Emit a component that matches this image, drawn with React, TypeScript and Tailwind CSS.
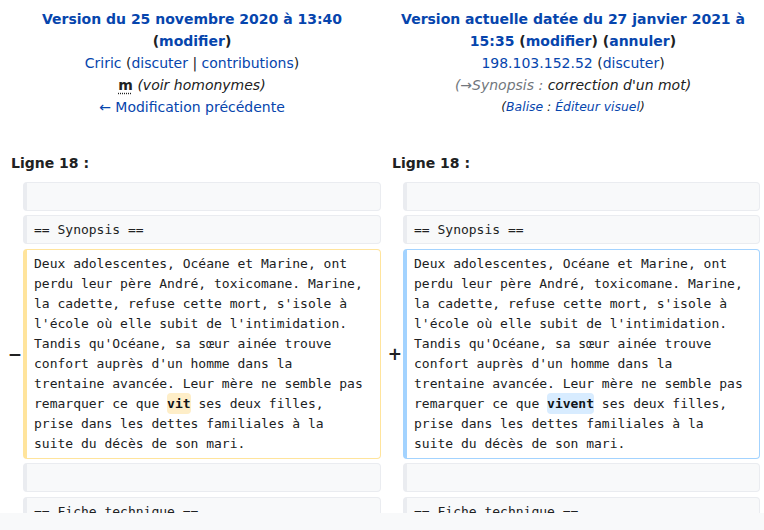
import React from "react";

const link = "text-[#0645ad]";

const leftLines: React.ReactNode[] = [
  "Deux adolescentes, Océane et Marine, ont",
  "perdu leur père André, toxicomane. Marine,",
  "la cadette, refuse cette mort, s'isole à",
  "l'école où elle subit de l'intimidation.",
  "Tandis qu'Océane, sa sœur ainée trouve",
  "confort auprès d'un homme dans la",
  "trentaine avancée. Leur mère ne semble pas",
  <>
    remarquer ce que{" "}
    <span className="rounded-[4px] bg-[#feeec8] py-[3px] font-bold text-[#101418]">vit</span>{" "}
    ses deux filles,
  </>,
  "prise dans les dettes familiales à la",
  "suite du décès de son mari.",
];

const rightLines: React.ReactNode[] = leftLines.map((l, i) =>
  i === 7 ? (
    <>
      remarquer ce que{" "}
      <span className="rounded-[4px] bg-[#d8ecff] py-[3px] font-bold text-[#101418]">vivent</span>{" "}
      ses deux filles,
    </>
  ) : (
    l
  )
);

function Context({ text }: { text?: string }) {
  return (
    <div className="min-h-[29px] rounded-[4px] border border-l-4 border-[#eaecf0] bg-[#f8f9fa] pb-[3px] pl-[7px] pr-2 pt-[4px] whitespace-pre">
      {text ?? "\u00a0"}
    </div>
  );
}

function Changed({ lines, side }: { lines: React.ReactNode[]; side: "del" | "add" }) {
  return (
    <div
      className={
        "rounded-[4px] border border-l-4 bg-white pb-[4px] pl-[7px] pr-2 pt-[4px] " +
        (side === "del" ? "border-[#ffe49c]" : "border-[#a3d3ff]")
      }
    >
      {lines.map((l, i) => (
        <div key={i} className="whitespace-pre">
          {l}
        </div>
      ))}
    </div>
  );
}

function Marker({ sign }: { sign?: string }) {
  return (
    <div className="flex items-center justify-end pr-[1px] font-['DejaVu_Sans',sans-serif] text-[17px] font-bold text-[#202122]">
      {sign}
    </div>
  );
}

const mono = "font-['DejaVu_Sans_Mono',monospace] text-[13px] leading-[20px]";

export default function App() {
  return (
    <div className="flex h-[530px] w-[764px] flex-col overflow-hidden bg-white font-['DejaVu_Sans',sans-serif] text-[14px] leading-[22px] text-[#202122]">
      <div className="h-[513px] overflow-hidden">
        {/* Revision headers */}
        <div className="grid grid-cols-2 pt-[8px] text-center">
          <div className="pl-[2px]">
            <div className="font-bold">
              <span className={link}>Version du 25 novembre 2020 à 13:40</span>
            </div>
            <div className="font-bold">
              (<span className={link}>modifier</span>)
            </div>
            <div>
              <span className={link}>Criric</span> (<span className={link}>discuter</span> |{" "}
              <span className={link}>contributions</span>)
            </div>
            <div>
              <span className="font-bold underline decoration-dotted underline-offset-[3px]">m</span>{" "}
              <span className="italic">(voir homonymes)</span>
            </div>
            <div>
              <span className={link}>← Modification précédente</span>
            </div>
          </div>
          <div>
            <div className="font-bold">
              <span className={link}>Version actuelle datée du 27 janvier 2021 à</span>
            </div>
            <div className="font-bold">
              <span className={link}>15:35</span> (<span className={link}>modifier</span>) (
              <span className={link}>annuler</span>)
            </div>
            <div>
              <span className={link}>198.103.152.52</span> (<span className={link}>discuter</span>)
            </div>
            <div className="italic">
              <span className="text-[#72777d]">(→Synopsis :</span> correction d'un mot)
            </div>
            <div className="text-[12.4px] italic">
              (<span className={link}>Balise</span> : <span className={link}>Éditeur visuel</span>)
            </div>
          </div>
        </div>

        {/* Diff table */}
        <div className="mt-[34px] grid grid-cols-[23px_358px_22px_357px] gap-y-[4.6px]">
          <div className="col-span-2 pb-[3px] pl-[11px] font-bold">Ligne 18 :</div>
          <div className="col-span-2 pb-[3px] pl-[11px] font-bold">Ligne 18 :</div>

          <Marker />
          <div className={mono}>
            <Context />
          </div>
          <Marker />
          <div className={mono}>
            <Context />
          </div>

          <Marker />
          <div className={mono}>
            <Context text="== Synopsis ==" />
          </div>
          <Marker />
          <div className={mono}>
            <Context text="== Synopsis ==" />
          </div>

          <Marker sign="−" />
          <div className={mono}>
            <Changed lines={leftLines} side="del" />
          </div>
          <Marker sign="+" />
          <div className={mono}>
            <Changed lines={rightLines} side="add" />
          </div>

          <Marker />
          <div className={mono}>
            <Context />
          </div>
          <Marker />
          <div className={mono}>
            <Context />
          </div>

          <Marker />
          <div className={mono}>
            <Context text="== Fiche technique ==" />
          </div>
          <Marker />
          <div className={mono}>
            <Context text="== Fiche technique ==" />
          </div>
        </div>
      </div>
      <div className="h-[17px] shrink-0 bg-[#f8f9fa]" />
    </div>
  );
}
